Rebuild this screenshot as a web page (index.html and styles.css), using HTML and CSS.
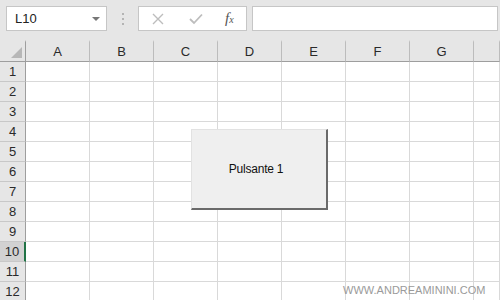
FILE: index.html
```html
<!DOCTYPE html>
<html lang="it">
<head>
    <meta charset="UTF-8">
    <meta name="viewport" content="width=device-width, initial-scale=1.0">
    <title>Pulsante 1</title>
    <link rel="stylesheet" href="styles.css">
</head>
<body>
    <div class="toolbar">
        <div class="name-box">
            <span>L10</span>
            <span class="arrow"></span>
        </div>
        <div class="grip"><i></i><i></i><i></i></div>
        <div class="fx-box">
            <svg width="12" height="12" viewBox="0 0 12 12"><path d="M1 1 L11 11 M11 1 L1 11" stroke="#bdbdbd" stroke-width="1.4" fill="none"/></svg>
            <svg width="14" height="12" viewBox="0 0 14 12"><path d="M1 6 L5 10 L13 1.5" stroke="#bdbdbd" stroke-width="1.8" fill="none"/></svg>
            <span class="fx">f<sub>x</sub></span>
        </div>
        <div class="formula"></div>
    </div>

    <div class="sheet">
        <div class="ch corner"><span class="tri"></span></div><div class="ch">A</div><div class="ch">B</div><div class="ch">C</div><div class="ch">D</div><div class="ch">E</div><div class="ch">F</div><div class="ch">G</div><div class="ch"></div>
        <div class="rh">1</div><div class="c"></div><div class="c"></div><div class="c"></div><div class="c"></div><div class="c"></div><div class="c"></div><div class="c"></div><div class="c"></div>
        <div class="rh">2</div><div class="c"></div><div class="c"></div><div class="c"></div><div class="c"></div><div class="c"></div><div class="c"></div><div class="c"></div><div class="c"></div>
        <div class="rh">3</div><div class="c"></div><div class="c"></div><div class="c"></div><div class="c"></div><div class="c"></div><div class="c"></div><div class="c"></div><div class="c"></div>
        <div class="rh">4</div><div class="c"></div><div class="c"></div><div class="c"></div><div class="c"></div><div class="c"></div><div class="c"></div><div class="c"></div><div class="c"></div>
        <div class="rh">5</div><div class="c"></div><div class="c"></div><div class="c"></div><div class="c"></div><div class="c"></div><div class="c"></div><div class="c"></div><div class="c"></div>
        <div class="rh">6</div><div class="c"></div><div class="c"></div><div class="c"></div><div class="c"></div><div class="c"></div><div class="c"></div><div class="c"></div><div class="c"></div>
        <div class="rh">7</div><div class="c"></div><div class="c"></div><div class="c"></div><div class="c"></div><div class="c"></div><div class="c"></div><div class="c"></div><div class="c"></div>
        <div class="rh">8</div><div class="c"></div><div class="c"></div><div class="c"></div><div class="c"></div><div class="c"></div><div class="c"></div><div class="c"></div><div class="c"></div>
        <div class="rh">9</div><div class="c"></div><div class="c"></div><div class="c"></div><div class="c"></div><div class="c"></div><div class="c"></div><div class="c"></div><div class="c"></div>
        <div class="rh selected">10</div><div class="c"></div><div class="c"></div><div class="c"></div><div class="c"></div><div class="c"></div><div class="c"></div><div class="c"></div><div class="c"></div>
        <div class="rh">11</div><div class="c"></div><div class="c"></div><div class="c"></div><div class="c"></div><div class="c"></div><div class="c"></div><div class="c"></div><div class="c"></div>
        <div class="rh">12</div><div class="c"></div><div class="c"></div><div class="c"></div><div class="c"></div><div class="c"></div><div class="c"></div><div class="c"></div><div class="c"></div>
    </div>

    <button class="form-btn">Pulsante 1</button>
    <div class="watermark">WWW.ANDREAMININI.COM</div>
</body>
</html>
```

FILE: styles.css
```css
/* styles.css */
body {
    margin: 0;
    width: 500px;
    height: 300px;
    overflow: hidden;
    position: relative;
    background-color: #e6e6e6;
    font-family: "Liberation Sans", Arial, sans-serif;
}

.toolbar {
    display: flex;
    height: 40px;
    padding: 6px 0 0 6px;
    box-sizing: border-box;
}

.name-box {
    display: flex;
    align-items: center;
    justify-content: space-between;
    width: 101px;
    height: 25px;
    box-sizing: border-box;
    padding: 0 6px 0 8px;
    background-color: #ffffff;
    border: 1px solid #c6c6c6;
    font-size: 13px;
    color: #222;
}

.arrow {
    width: 0;
    height: 0;
    border-left: 4px solid transparent;
    border-right: 4px solid transparent;
    border-top: 4px solid #777;
}

.grip {
    width: 31px;
    display: flex;
    flex-direction: column;
    align-items: center;
    justify-content: center;
    gap: 3px;
    height: 25px;
}

.grip i {
    width: 2px;
    height: 2px;
    background-color: #b4b4b4;
}

.fx-box {
    display: flex;
    align-items: center;
    width: 109px;
    height: 25px;
    box-sizing: border-box;
    padding: 0 0 0 13px;
    background-color: #ffffff;
    border: 1px solid #c6c6c6;
}

.fx-box svg:nth-child(2) {
    margin-left: 25px;
}

.fx {
    margin-left: 22px;
    font-family: "Liberation Serif", serif;
    font-style: italic;
    font-size: 15px;
    color: #555;
}

.fx sub {
    font-size: 10px;
    vertical-align: 0;
}

.formula {
    margin-left: 5px;
    width: 246px;
    height: 25px;
    box-sizing: border-box;
    background-color: #ffffff;
    border: 1px solid #c6c6c6;
}

.sheet {
    display: grid;
    grid-template-columns: 26px repeat(7, 64px) 26px;
    grid-template-rows: 22px repeat(12, 20px);
    background-color: #ffffff;
}

.sheet > div {
    box-sizing: border-box;
}

.ch {
    background-color: #e6e6e6;
    border-right: 1px solid #bcbcbc;
    border-bottom: 1px solid #9e9e9e;
    border-top: 2px solid #e6e6e6;
    display: flex;
    align-items: center;
    justify-content: center;
    font-size: 13px;
    color: #2a2a2a;
}

.corner {
    position: relative;
    border-right-color: #9e9e9e;
}

.tri {
    position: absolute;
    right: 3px;
    bottom: 3px;
    width: 0;
    height: 0;
    border-left: 11px solid transparent;
    border-bottom: 11px solid #b7b7b7;
}

.rh {
    background-color: #e6e6e6;
    border-right: 1px solid #9e9e9e;
    border-bottom: 1px solid #c8c8c8;
    display: flex;
    align-items: center;
    justify-content: center;
    font-size: 13px;
    color: #2a2a2a;
}

.rh.selected {
    background-color: #d2d2d2;
    border-right: 2px solid #217346;
}

.c {
    border-right: 1px solid #d9d9d9;
    border-bottom: 1px solid #d9d9d9;
}

.form-btn {
    position: absolute;
    left: 191px;
    top: 129px;
    width: 137px;
    height: 81px;
    margin: 0;
    padding: 0 6px 0 0;
    background-color: #efefef;
    border: none;
    border-top: 1px solid #e2e2e2;
    border-left: 1px solid #e2e2e2;
    border-right: 2px solid #6a6a6a;
    border-bottom: 2px solid #6a6a6a;
    font-family: "Liberation Sans", Arial, sans-serif;
    font-size: 12px;
    letter-spacing: -0.2px;
    color: #111;
}

.watermark {
    position: absolute;
    left: 343px;
    top: 284px;
    font-size: 11px;
    color: #9a9a9a;
}
```
